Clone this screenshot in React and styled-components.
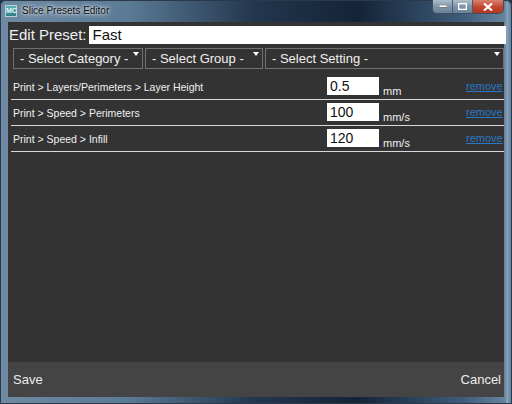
import React from 'react'
import styled, { createGlobalStyle } from 'styled-components'

const Global = createGlobalStyle`
  html, body { margin: 0; padding: 0; background: #1d3147; }
  body { font-family: 'Liberation Sans', Arial, sans-serif; }
`

const Window = styled.div`
  width: 512px;
  height: 404px;
  box-sizing: border-box;
  display: flex;
  flex-direction: column;
  padding: 0 8px 7px 8px;
  border-radius: 6px 6px 0 0;
  box-shadow: inset 0 0 0 1px #2a3a4a;
  background:
    linear-gradient(90deg, rgba(255,255,255,0) 0, rgba(255,255,255,0) 505px, rgba(200,225,240,0.35) 507px, rgba(255,255,255,0) 510px),
    linear-gradient(90deg, #6f8aa3 0%, #5b7a95 25%, #22364d 50%, #142438 70%, #3d5b78 90%, #6c8aa5 100%);
`

const TitleBar = styled.div`
  height: 22px;
  flex: none;
  display: flex;
  align-items: flex-start;
  margin: 0 -8px;
  padding: 0 8px 0 5px;
`

const AppIcon = styled.div`
  width: 12px;
  height: 12px;
  margin-top: 5px;
  background: linear-gradient(#5fb3b3, #2f7f86);
  border: 1px solid #b6d4d8;
  box-sizing: border-box;
  color: #e8f6f6;
  font-size: 7px;
  line-height: 10px;
  text-align: center;
  font-weight: bold;
`

const Title = styled.div`
  margin: 5px 0 0 5px;
  font-family: 'Liberation Sans', Arial, sans-serif;
  font-size: 10px;
  color: #111;
  text-shadow: 0 0 6px rgba(255,255,255,0.9), 0 0 3px rgba(255,255,255,0.9);
`

const Controls = styled.div`
  margin-left: auto;
  display: flex;
  height: 13px;
  border: 1px solid #3c4f63;
  border-top: none;
  border-radius: 0 0 5px 5px;
  overflow: hidden;
`

const CtrlBtn = styled.div`
  width: ${p => p.$w}px;
  height: 13px;
  display: flex;
  align-items: center;
  justify-content: center;
  border-left: ${p => (p.$first ? 'none' : '1px solid #4b5d70')};
  background: ${p => (p.$close
    ? 'linear-gradient(#d9826f, #c2452e 55%, #b33520)'
    : 'linear-gradient(#aebdcb, #7f95aa 50%, #6a8197)')};
`

const Client = styled.div`
  flex: 1;
  display: flex;
  flex-direction: column;
  background: #333333;
  min-height: 0;
`

const PresetRow = styled.div`
  display: flex;
  align-items: center;
  height: 19px;
  margin-top: 3px;
  padding-left: 1px;
`

const PresetLabel = styled.span`
  color: #f0f0f0;
  font-size: 15px;
  margin-right: 2px;
  flex: none;
  white-space: nowrap;
`

const PresetInput = styled.input`
  flex: 1;
  min-width: 0;
  height: 18px;
  box-sizing: border-box;
  border: none;
  outline: none;
  margin-right: -2px;
  padding: 0 4px;
  font-family: 'Liberation Sans', Arial, sans-serif;
  font-size: 15px;
  color: #111;
  background: #fff;
`

const SelectRow = styled.div`
  display: flex;
  gap: 2px;
  margin: 4px 0 0 5px;
  height: 21px;
`

const Select = styled.div`
  position: relative;
  width: ${p => p.$w}px;
  flex: ${p => (p.$grow ? 1 : 'none')};
  box-sizing: border-box;
  border: 1px solid #707070;
  background: #333;
  color: #f0f0f0;
  font-size: 13px;
  line-height: 19px;
  padding-left: 6px;
  white-space: nowrap;

  &::after {
    content: '';
    position: absolute;
    right: 3px;
    top: 3px;
    border-left: 3px solid transparent;
    border-right: 3px solid transparent;
    border-top: 4px solid #fff;
  }
`

const List = styled.div`
  flex: 1;
  margin: 5px 0 0 3px;
`

const SettingRow = styled.div`
  display: flex;
  align-items: flex-start;
  height: 25px;
  border-bottom: 1px solid #d8d8d8;
`

const Path = styled.span`
  flex: 1;
  color: #f0f0f0;
  font-size: 10.5px;
  padding: 7px 0 0 2px;
`

const ValueInput = styled.input`
  width: 52px;
  height: 18px;
  box-sizing: border-box;
  margin-top: 3px;
  border: none;
  outline: none;
  padding: 0 3px;
  font-family: 'Liberation Sans', Arial, sans-serif;
  font-size: 14px;
  color: #111;
  background: #fff;
`

const Unit = styled.span`
  width: 87px;
  color: #f0f0f0;
  font-size: 11px;
  padding: 11px 0 0 4px;
  box-sizing: border-box;
`

const Remove = styled.a`
  width: 38px;
  color: #2a78c8;
  font-size: 11px;
  padding-top: 6px;
  text-decoration: underline;
  cursor: pointer;
`

const Footer = styled.div`
  height: 35px;
  flex: none;
  display: flex;
  align-items: center;
  justify-content: space-between;
  background: #444444;
  padding: 0 3px 0 5px;
`

const FooterBtn = styled.span`
  color: #ececec;
  font-size: 13px;
  cursor: pointer;
`

const settings = [
  { path: 'Print > Layers/Perimeters > Layer Height', value: '0.5', unit: 'mm' },
  { path: 'Print > Speed > Perimeters', value: '100', unit: 'mm/s' },
  { path: 'Print > Speed > Infill', value: '120', unit: 'mm/s' },
]

export default function App() {
  return (
    <>
      <Global />
      <Window>
        <TitleBar>
          <AppIcon>MC</AppIcon>
          <Title>Slice Presets Editor</Title>
          <Controls>
            <CtrlBtn $w={19} $first>
              <svg width="8" height="3"><rect x="0" y="0" width="8" height="2.5" fill="#fff" stroke="#333" strokeWidth="0.5" /></svg>
            </CtrlBtn>
            <CtrlBtn $w={19}>
              <svg width="9" height="7"><rect x="0.5" y="0.5" width="8" height="6" fill="none" stroke="#fff" strokeWidth="1.6" /></svg>
            </CtrlBtn>
            <CtrlBtn $w={30} $close>
              <svg width="10" height="8" viewBox="0 0 10 8"><path d="M1 0.5 L9 7.5 M9 0.5 L1 7.5" stroke="#fff" strokeWidth="2.2" /></svg>
            </CtrlBtn>
          </Controls>
        </TitleBar>
        <Client>
          <PresetRow>
            <PresetLabel>Edit Preset:</PresetLabel>
            <PresetInput defaultValue="Fast" />
          </PresetRow>
          <SelectRow>
            <Select $w={130}>- Select Category -</Select>
            <Select $w={118}>- Select Group -</Select>
            <Select $grow>- Select Setting -</Select>
          </SelectRow>
          <List>
            {settings.map(s => (
              <SettingRow key={s.path}>
                <Path>{s.path}</Path>
                <ValueInput defaultValue={s.value} />
                <Unit>{s.unit}</Unit>
                <Remove>remove</Remove>
              </SettingRow>
            ))}
          </List>
          <Footer>
            <FooterBtn>Save</FooterBtn>
            <FooterBtn>Cancel</FooterBtn>
          </Footer>
        </Client>
      </Window>
    </>
  )
}
